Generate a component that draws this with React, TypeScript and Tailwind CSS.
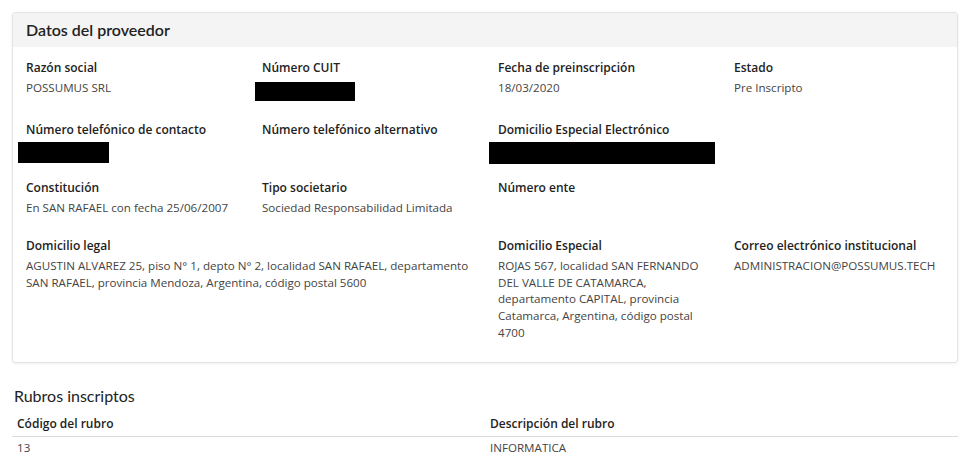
type Field = {
  label: string;
  value?: string;
  redact?: string;
  wide?: boolean;
};

const rowOne: Field[] = [
  { label: "Razón social", value: "POSSUMUS SRL" },
  { label: "Número CUIT", redact: "top-[2px] left-[-7px] h-[19px] w-[100px]" },
  { label: "Fecha de preinscripción", value: "18/03/2020" },
  { label: "Estado", value: "Pre Inscripto" },
];

const rest: Field[] = [
  {
    label: "Número telefónico de contacto",
    redact: "top-0 left-[-8px] h-[21px] w-[91px]",
  },
  { label: "Número telefónico alternativo" },
  {
    label: "Domicilio Especial Electrónico",
    redact: "top-0 left-[-9px] h-[22px] w-[226px]",
  },
  { label: "" },
  { label: "Constitución", value: "En SAN RAFAEL con fecha 25/06/2007" },
  { label: "Tipo societario", value: "Sociedad Responsabilidad Limitada" },
  { label: "Número ente" },
  { label: "" },
  {
    label: "Domicilio legal",
    value:
      "AGUSTIN ALVAREZ 25, piso N° 1, depto N° 2, localidad SAN RAFAEL, departamento SAN RAFAEL, provincia Mendoza, Argentina, código postal 5600",
    wide: true,
  },
  {
    label: "Domicilio Especial",
    value:
      "ROJAS 567, localidad SAN FERNANDO DEL VALLE DE CATAMARCA, departamento CAPITAL, provincia Catamarca, Argentina, código postal 4700",
  },
  {
    label: "Correo electrónico institucional",
    value: "ADMINISTRACION@POSSUMUS.TECH",
  },
];

function Item({ field }: { field: Field }) {
  return (
    <div
      className={`mb-5 pl-[13px] ${field.wide ? "col-span-2 pr-[4px]" : "pr-[13px]"}`}
    >
      <p className="min-h-[17px] text-[12px] leading-[17px] font-semibold text-[#222]">
        {field.label}
      </p>
      <div className="relative mt-1 min-h-[17px]">
        {field.value && (
          <p className="text-[11.6px] leading-[16.7px] text-[#444]">
            {field.value}
          </p>
        )}
        {field.redact && (
          <div className={`absolute bg-black ${field.redact}`} />
        )}
      </div>
    </div>
  );
}

export default function App() {
  return (
    <div className="min-h-[463px] bg-white px-[12px] pt-[12px] font-['Open_Sans',sans-serif] text-[#333]">
      <section className="w-[946px] overflow-hidden rounded-[3px] border border-[#e3e3e3] shadow-[0_1px_3px_rgba(0,0,0,0.06)]">
        <div className="flex h-[34px] items-center bg-[#f4f4f4] px-[13px]">
          <h2 className="font-['Lato',sans-serif] text-[16px] font-semibold text-[#222]">
            Datos del proveedor
          </h2>
        </div>
        <div className="grid grid-cols-4 pt-[12px]">
          {rowOne.map((f, i) => (
            <div key={i} className="mb-1">
              <Item field={f} />
            </div>
          ))}
          {rest.map((f, i) => (
            <Item key={i} field={f} />
          ))}
        </div>
      </section>

      <h3 className="mt-[21px] ml-[2px] font-['Lato',sans-serif] text-[16px] leading-[24px] text-[#222]">
        Rubros inscriptos
      </h3>
      <table className="mt-[7px] w-[946px] table-fixed text-left text-[12px] leading-[18px]">
        <thead>
          <tr className="border-b border-[#dcdcdc]">
            <th className="px-[5px] pb-[3px] font-semibold text-[#222]">
              Código del rubro
            </th>
            <th className="px-[5px] pb-[3px] font-semibold text-[#222]">
              Descripción del rubro
            </th>
          </tr>
        </thead>
        <tbody>
          <tr>
            <td className="px-[5px] pt-[2px] text-[11.6px] text-[#444]">13</td>
            <td className="px-[5px] pt-[2px] text-[11.6px] text-[#444]">
              INFORMATICA
            </td>
          </tr>
        </tbody>
      </table>
    </div>
  );
}
